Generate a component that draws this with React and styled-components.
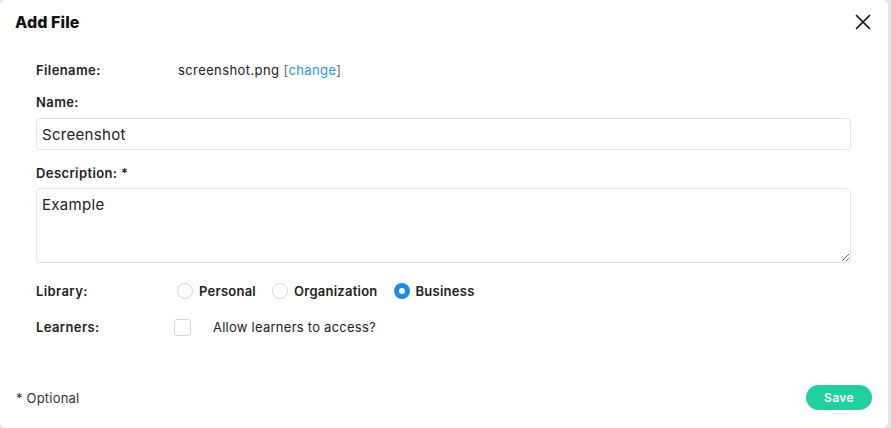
import styled, { createGlobalStyle } from 'styled-components'

const GlobalStyle = createGlobalStyle`
    html, body {
        margin: 0;
        padding: 0;
        background: #e6e6e8;
    }
    body {
        font-family: Inter, "Open Sans", sans-serif;
        color: #222;
    }
`;

const Modal = styled.div`
    width: 888px;
    height: 428px;
    background: #fff;
    border-radius: 6px;
    display: flex;
    flex-direction: column;
    box-sizing: border-box;
`;

const Header = styled.div`
    display: flex;
    align-items: center;
    justify-content: space-between;
    height: 44px;
    padding: 0 17px 0 15px;
`;

const Title = styled.h2`
    margin: 0;
    font-size: 16px;
    font-weight: 800;
    color: #111;
    letter-spacing: 0.1px;
`;

const CloseButton = styled.button`
    border: 0;
    background: none;
    padding: 0;
    width: 16px;
    height: 16px;
    display: flex;
    align-items: center;
    justify-content: center;
    cursor: pointer;
`;

const Body = styled.div`
    flex: 1;
    padding: 16px 37px 0 36px;
    display: flex;
    flex-direction: column;
`;

const Row = styled.div`
    display: flex;
    align-items: center;
    height: 20px;
    margin-top: ${p => p.$mt || 0}px;
`;

const Label = styled.div`
    width: ${p => p.$w || 142}px;
    flex: none;
    font-size: 13px;
    font-weight: 600;
    letter-spacing: 0.4px;
    color: #222;
    margin-top: ${p => p.$mt || 0}px;
    line-height: 20px;
`;

const Value = styled.span`
    font-size: 13px;
    letter-spacing: 0.4px;
    color: #222;
`;

const Link = styled.a`
    color: #2a9ad8;
    text-decoration: none;
`;

const Bracket = styled.span`
    color: #666;
`;

const Input = styled.input`
    display: block;
    box-sizing: border-box;
    width: 100%;
    height: 32px;
    margin-top: 6px;
    border: 1px solid #e2e2ea;
    border-radius: 4px;
    padding: 0 5px;
    font-family: inherit;
    font-size: 15px;
    letter-spacing: 0.3px;
    color: #222;
    outline: none;
`;

const TextArea = styled.textarea`
    display: block;
    box-sizing: border-box;
    width: 100%;
    height: 75px;
    margin-top: 5px;
    border: 1px solid #e2e2ea;
    border-radius: 4px;
    padding: 6px 5px;
    font-family: inherit;
    font-size: 15px;
    letter-spacing: 0.3px;
    color: #222;
    outline: none;
    resize: vertical;
`;

const Options = styled.div`
    display: flex;
    align-items: center;
    gap: 16px;
    margin-left: -1px;
`;

const Option = styled.label`
    display: flex;
    align-items: center;
    gap: 6px;
    font-size: 13px;
    font-weight: 600;
    letter-spacing: 0.25px;
    color: #222;
`;

const Radio = styled.span`
    width: 16px;
    height: 16px;
    box-sizing: border-box;
    border-radius: 50%;
    border: ${p => (p.$checked ? '5px solid #1f8ae3' : '1px solid #d6d6de')};
    background: #fff;
`;

const Checkbox = styled.span`
    width: 17px;
    height: 17px;
    box-sizing: border-box;
    border: 1px solid #d6d6de;
    border-radius: 3px;
    margin-left: -4px;
    margin-right: 22px;
`;

const CheckText = styled.span`
    font-size: 13px;
    letter-spacing: 0.25px;
    color: #222;
`;

const Footer = styled.div`
    display: flex;
    align-items: center;
    justify-content: space-between;
    padding: 0 16px 18px 16px;
`;

const Note = styled.span`
    font-size: 13px;
    letter-spacing: 0.2px;
    color: #333;
`;

const SaveButton = styled.button`
    width: 66px;
    height: 25px;
    border: 0;
    border-radius: 13px;
    background: #22cf9f;
    color: #fff;
    font-family: inherit;
    font-size: 12px;
    font-weight: 600;
    letter-spacing: 0.4px;
    cursor: pointer;
`;

const CloseIcon = () => (
    <svg width="16" height="16" viewBox="0 0 16 16" fill="none">
        <path d="M1.5 1.5L14.5 14.5M14.5 1.5L1.5 14.5" stroke="#111" strokeWidth="1.7" strokeLinecap="round" />
    </svg>
);

const App = () => {
    const libraries = [
        { name: 'Personal', checked: false },
        { name: 'Organization', checked: false },
        { name: 'Business', checked: true },
    ];

    return (
        <>
            <GlobalStyle />
            <Modal>
                <Header>
                    <Title>Add File</Title>
                    <CloseButton aria-label="Close">
                        <CloseIcon />
                    </CloseButton>
                </Header>
                <Body>
                    <Row>
                        <Label>Filename:</Label>
                        <Value>
                            screenshot.png <Bracket>[</Bracket><Link href="#">change</Link><Bracket>]</Bracket>
                        </Value>
                    </Row>
                    <Label $mt={12}>Name:</Label>
                    <Input defaultValue="Screenshot" />
                    <Label $mt={13}>Description: *</Label>
                    <TextArea defaultValue="Example" />
                    <Row $mt={18}>
                        <Label>Library:</Label>
                        <Options>
                            {libraries.map(lib => (
                                <Option key={lib.name}>
                                    <Radio $checked={lib.checked} />
                                    {lib.name}
                                </Option>
                            ))}
                        </Options>
                    </Row>
                    <Row $mt={16}>
                        <Label>Learners:</Label>
                        <Checkbox />
                        <CheckText>Allow learners to access?</CheckText>
                    </Row>
                </Body>
                <Footer>
                    <Note>* Optional</Note>
                    <SaveButton>Save</SaveButton>
                </Footer>
            </Modal>
        </>
    );
};

export default App;
